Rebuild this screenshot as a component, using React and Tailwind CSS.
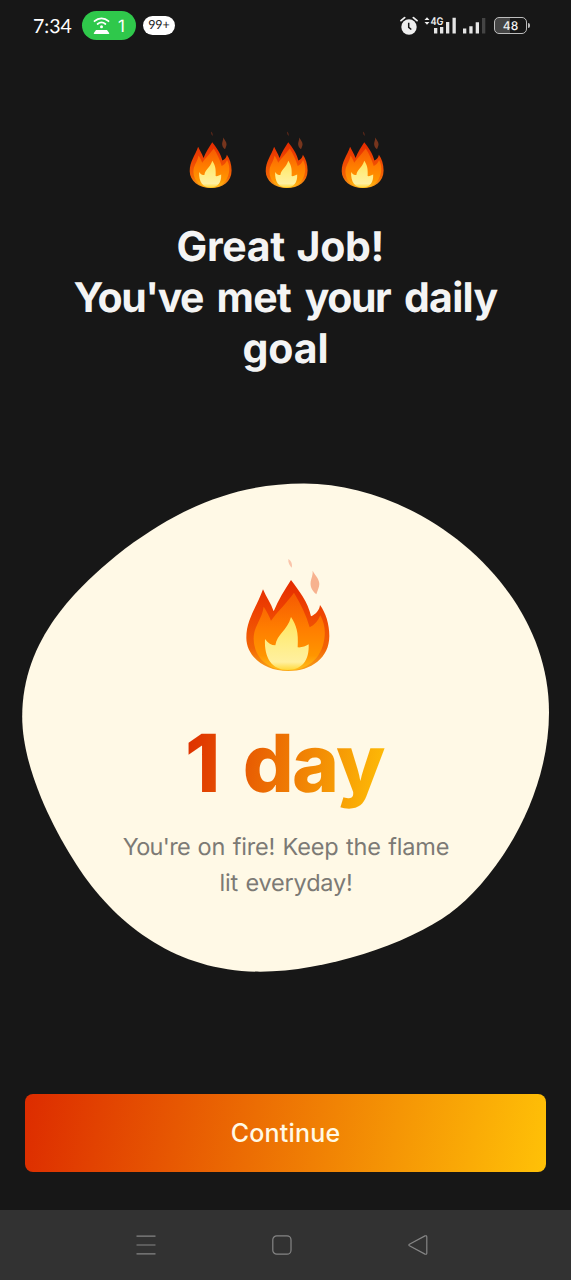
import React from "react";

function Flame({ id, className }) {
  const outer = `url(#${id}-outer)`;
  const mid = `url(#${id}-mid)`;
  const core = `url(#${id}-core)`;
  return (
    <svg viewBox="0 0 330 390" className={className} aria-hidden="true">
      <defs>
        <linearGradient id={`${id}-outer`} x1="0" y1="90" x2="0" y2="363" gradientUnits="userSpaceOnUse">
          <stop offset="0" stopColor="#e42a00" />
          <stop offset="0.35" stopColor="#ee4302" />
          <stop offset="0.75" stopColor="#f26405" />
          <stop offset="1" stopColor="#f9a51a" />
        </linearGradient>
        <linearGradient id={`${id}-mid`} x1="0" y1="130" x2="0" y2="363" gradientUnits="userSpaceOnUse">
          <stop offset="0" stopColor="#f65a02" />
          <stop offset="0.45" stopColor="#ff7d00" />
          <stop offset="0.8" stopColor="#ff9500" />
          <stop offset="1" stopColor="#ffc21c" />
        </linearGradient>
        <linearGradient id={`${id}-core`} x1="0" y1="200" x2="0" y2="360" gradientUnits="userSpaceOnUse">
          <stop offset="0" stopColor="#ffe45c" />
          <stop offset="0.5" stopColor="#ffed85" />
          <stop offset="0.85" stopColor="#fff0a0" />
          <stop offset="1" stopColor="#ffd83a" />
        </linearGradient>
      </defs>
      <path d="M160 27C168 32 173 42 170 53C163 45 159 38 160 27Z" fill="#ee4b20" opacity=".3" />
      <path d="M233 62C242 78 253 87 253 102C253 112 247 122 244 133C231 122 225 110 227 95C229 84 234 74 233 62Z" fill="#ee5a25" opacity=".45" />
      <path d="M84 118C94 142 108 160 116 184C130 150 149 119 168 90C192 122 219 156 228 199C243 192 253 181 255 165C272 188 283 222 283 258C283 324 229 363 160 363C87 363 34 318 34 263C34 207 66 170 84 118Z" fill={outer} />
      <path d="M86 170C96 184 104 201 108 212C127 185 154 160 177 128C198 163 214 196 224 232C239 225 249 213 256 196C268 218 272 242 268 266C259 329 214 361 160 361C101 361 58 325 56 268C55 229 80 211 86 170Z" fill={mid} />
      <path d="M168 201C184 226 191 245 188 292C201 293 211 289 221 283C223 332 201 360 158 360C112 360 87 325 90 267C99 280 109 286 121 286C126 252 157 242 168 201Z" fill={core} />
    </svg>
  );
}

function StatusBar() {
  return (
    <header className="flex h-[51px] items-center pl-[33px] pr-[41px] text-white">
      <span className="w-[49px] pt-[2px] font-['Lato',sans-serif] text-[19.5px] leading-none">7:34</span>
      <div className="flex h-[29px] w-[54px] items-center justify-center gap-[8px] rounded-full bg-[#2fc84b]">
        <svg viewBox="0 0 17 18" className="h-[18px] w-[17px]" fill="none" stroke="white" strokeLinecap="round">
          <path d="M1.5 4.2C5.5.5 11.5.5 15.5 4.2" strokeWidth="1.8" />
          <path d="M4.6 7C7 5 10 5 12.4 7" strokeWidth="1.8" />
          <circle cx="8.5" cy="9.7" r="1.5" fill="white" stroke="none" />
          <path d="M3 13h11l2.3 3.2q0 .8-.8.8h-14q-.8 0-.8-.8z" fill="white" stroke="none" />
        </svg>
        <span className="pt-[3px] font-['Inter',sans-serif] text-[17px] leading-none">1</span>
      </div>
      <div className="ml-[7px] flex h-[19px] w-[32px] items-center justify-center rounded-full bg-white font-['Lato',sans-serif] text-[12.5px] leading-none text-[#222]">
        99+
      </div>
      <div className="ml-auto flex items-center">
        <svg viewBox="0 0 18 20" className="h-5 w-[18px]" fill="none">
          <circle cx="9" cy="11" r="7.7" fill="#efefef" />
          <path d="M1 4.6 4.6 1.6M17 4.6 13.4 1.6" stroke="#efefef" strokeWidth="1.8" strokeLinecap="round" />
          <path d="M8.7 6.8V11.4L11.3 13.5" stroke="#171717" strokeWidth="1.5" />
        </svg>
        <svg viewBox="0 0 33 20" className="ml-[6px] h-5 w-[33px]">
          <path d="M.5 4 3 1.2 5.5 4zM.5 6H5.5L3 8.8z" fill="#efefef" />
          <path d="M10 12h3.3v5.5H10zM16 11h3.3v6.5H16zM22 6h3.3v11.5H22zM28.5 1.8h3.3v15.7h-3.3z" fill="#e5e5e5" />
          <text x="6.5" y="8.8" fontSize="10.5" fontFamily="Inter, sans-serif" fontWeight="600" fill="#efefef" textLength="13" lengthAdjust="spacingAndGlyphs">4G</text>
        </svg>
        <svg viewBox="0 0 24 20" className="ml-[5px] h-5 w-6">
          <path d="M1 12.5h3.3v5H1zM7.3 10.2h3.3v7.3H7.3zM13.7 6.3H17v11.2h-3.3z" fill="#e5e5e5" />
          <path d="M20 2h3.3v15.5H20z" fill="#444" />
        </svg>
        <div className="ml-[8px] flex items-center gap-px">
          <div className="flex h-[17px] w-[33px] items-center justify-center rounded-[5px] border-[1.5px] border-[#bdbdbd] bg-linear-to-r from-[#454545] from-50% to-[#171717] to-50% font-['Inter',sans-serif] text-[12px] font-medium leading-none text-[#f2f2f2]">
            48
          </div>
          <div className="h-[5px] w-[2px] rounded-r bg-[#bdbdbd]" />
        </div>
      </div>
    </header>
  );
}

function StreakCard() {
  return (
    <section className="grid h-[490px] w-[528px] shrink-0">
      <svg viewBox="22 483 528 490" className="col-start-1 row-start-1 h-[490px] w-[528px]" aria-hidden="true">
        <path
          fill="#fff9e6"
          d="M304 483.5C420 483.5 549 585 549 712C549 800 495 880 450 913.3C408 944 325 971.7 260 971.7C180 971.7 120 929 80 870C50 825 22.2 765 22.2 716.7C22.2 640 75 588 125.6 548.3C180 508 235 483.5 304 483.5Z"
        />
      </svg>
      <div className="col-start-1 row-start-1 flex flex-col items-center pt-[67px]">
        <Flame id="streak" className="h-[130px] w-[110px] translate-x-[4px]" />
        <p className="mt-[34px] bg-linear-[100deg,#dd2c00,#ffc107] bg-clip-text pr-[2px] text-[80px] leading-[100px] font-extrabold tracking-[-1.6px] text-transparent [word-spacing:8px]">
          1 day
        </p>
        <p className="mt-[15px] pl-px text-center text-[23.5px] leading-[36.5px] tracking-[-0.2px] text-[#7c7a75] [word-spacing:1.2px]">
          <span className="tracking-[-0.7px]">You're</span> on fire! Keep the flame
          <br />
          lit everyday!
        </p>
      </div>
    </section>
  );
}

function NavigationBar() {
  return (
    <nav className="flex h-[70px] items-center justify-center gap-[116px] bg-[#323232] pr-[8px]">
      <svg viewBox="0 0 20 20" className="size-5" stroke="#858585" strokeWidth="1.2">
        <path d="M.5 1.2h19M.5 10h19M.5 18.8h19" />
      </svg>
      <svg viewBox="0 0 20 20" className="size-5" fill="none" stroke="#858585" strokeWidth="1.2">
        <rect x=".8" y=".8" width="18.2" height="18.4" rx="4" />
      </svg>
      <svg viewBox="0 0 20 20" className="size-5" fill="none" stroke="#858585" strokeWidth="1.2" strokeLinejoin="round">
        <path d="M1.4 9.2 17 .9q1.8-.6 1.8 1.1v16q0 1.7-1.8 1.1L1.4 10.8q-1-.8 0-1.6z" />
      </svg>
    </nav>
  );
}

export default function App() {
  return (
    <div className="flex h-[1280px] w-[571px] flex-col overflow-hidden bg-[#171717] font-['Inter',sans-serif] [text-rendering:geometricPrecision]">
      <StatusBar />
      <main className="flex flex-1 flex-col items-center">
        <div className="mt-[76px] flex gap-[20.7px] pl-[4px]">
          <Flame id="flame-a" className="h-[65.6px] w-[55.5px]" />
          <Flame id="flame-b" className="h-[65.6px] w-[55.5px]" />
          <Flame id="flame-c" className="h-[65.6px] w-[55.5px]" />
        </div>
        <h1 className="mt-[28px] text-center text-[41px] leading-[51px] font-bold text-[#f4f4f4]">
          <span className="block pl-px tracking-[-0.3px] [word-spacing:2px]">Great Job!&nbsp;</span>
          <span className="block tracking-[-0.7px] [word-spacing:4.5px]">
            <span className="tracking-[-1.5px]">You've</span> met <span className="tracking-[-1.4px]">your</span> daily
          </span>
          <span className="block tracking-[-0.1px]">goal</span>
        </h1>
        <div className="mt-[109px]">
          <StreakCard />
        </div>
        <button className="mt-[121px] h-[78px] w-[521px] rounded-[8px] bg-linear-[100deg,#dd2c00,#ffc107] pt-[3px] text-[25px] font-medium tracking-[0.2px] text-[#fff9e6]">
          Continue
        </button>
      </main>
      <NavigationBar />
    </div>
  );
}
